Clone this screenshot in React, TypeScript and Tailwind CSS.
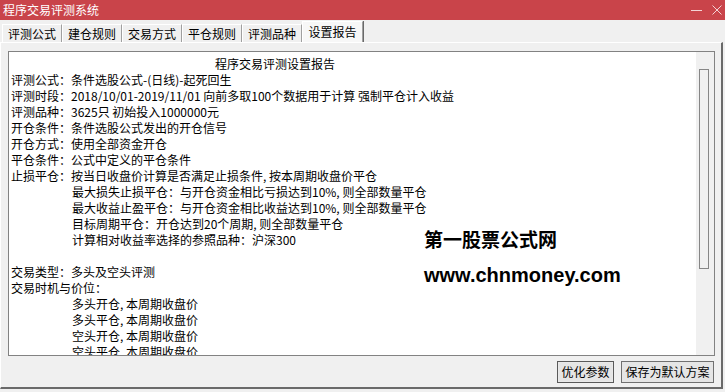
const lines: { text: string; indent?: number }[] = [
  { text: "程序交易评测设置报告", indent: 204 },
  { text: "评测公式：条件选股公式-(日线)-起死回生" },
  { text: "评测时段：2018/10/01-2019/11/01 向前多取100个数据用于计算 强制平仓计入收益" },
  { text: "评测品种：3625只 初始投入1000000元" },
  { text: "开仓条件：条件选股公式发出的开仓信号" },
  { text: "开仓方式：使用全部资金开仓" },
  { text: "平仓条件：公式中定义的平仓条件" },
  { text: "止损平仓：按当日收盘价计算是否满足止损条件, 按本周期收盘价平仓" },
  { text: "最大损失止损平仓：与开仓资金相比亏损达到10%, 则全部数量平仓", indent: 61 },
  { text: "最大收益止盈平仓：与开仓资金相比收益达到10%, 则全部数量平仓", indent: 61 },
  { text: "目标周期平仓：开仓达到20个周期, 则全部数量平仓", indent: 61 },
  { text: "计算相对收益率选择的参照品种：沪深300", indent: 61 },
  { text: "" },
  { text: "交易类型：多头及空头评测" },
  { text: "交易时机与价位：" },
  { text: "多头开仓, 本周期收盘价", indent: 61 },
  { text: "多头平仓, 本周期收盘价", indent: 61 },
  { text: "空头开仓, 本周期收盘价", indent: 61 },
  { text: "空头平仓, 本周期收盘价", indent: 61 },
];

const tabs = ["评测公式", "建仓规则", "交易方式", "平仓规则", "评测品种"];

export default function App() {
  return (
    <div
      className="relative w-[725px] h-[392px] overflow-hidden bg-[#f0f0f0] text-[12px] text-black"
      style={{ fontFamily: '"Noto Sans CJK SC", sans-serif' }}
    >
      {/* Title bar */}
      <div className="h-[20px] bg-[#c9444a] flex items-center pl-[3px] pr-[3px] text-white">
        <span className="leading-[20px]">程序交易评测系统</span>
        <div className="ml-auto flex items-center gap-[10px]">
          <svg width="11" height="10" viewBox="0 0 11 10">
            <line x1="0" y1="5.5" x2="11" y2="5.5" stroke="#f3d3d5" strokeWidth="1" />
          </svg>
          <svg width="10" height="10" viewBox="0 0 10 10">
            <path d="M0.5 0.5 L9.5 9.5 M9.5 0.5 L0.5 9.5" stroke="#f3d3d5" strokeWidth="1" />
          </svg>
        </div>
      </div>

      {/* Tabs */}
      <div className="h-[22px] flex items-end pl-[2px]">
        {tabs.map((t) => (
          <div
            key={t}
            className="w-[60px] h-[18px] flex items-center justify-center border-l border-t border-white border-r border-r-[#a0a0a0] shadow-[1px_0_0_#696969] leading-[16px]"
          >
            {t}
          </div>
        ))}
        <div className="w-[61px] h-[21px] flex items-center justify-center bg-[#f7f7f7] border-l border-t border-white border-r border-r-[#a0a0a0] shadow-[1px_0_0_#696969] leading-[18px] pb-[1px]">
          设置报告
        </div>
      </div>

      {/* Tab page */}
      <div className="w-[723px] h-[347px] border-t border-l border-white border-r-2 border-b-2 border-r-[#6a6a6a] border-b-[#6a6a6a] flex flex-col">
        <div className="ml-[7px] mt-[8px] w-[707px] h-[305px] border border-[#828282] bg-white flex">
          <div className="flex-1 overflow-hidden pl-[2px] pt-[4px]">
            {lines.map((l, i) => (
              <div
                key={i}
                className="h-[16px] leading-[16px] whitespace-nowrap"
                style={l.indent ? { paddingLeft: l.indent } : undefined}
              >
                {l.text}
              </div>
            ))}
          </div>
          <div className="w-[18px] h-full bg-[#f0f0f0] pt-[17px] pl-[3px]">
            <div className="w-[10px] h-[200px] border border-[#868686] bg-[#f0f0f0]" />
          </div>
        </div>

        <div className="mt-[5px] flex justify-end gap-[7px] pr-[7px]">
          <button className="w-[57px] h-[22px] border border-[#5a5a5a] bg-[#e5e5e5] shadow-[inset_0_0_0_1px_#e9e9e9] leading-[18px]">
            优化参数
          </button>
          <button className="w-[93px] h-[22px] border border-[#707070] bg-[#e5e5e5] leading-[18px]">
            保存为默认方案
          </button>
        </div>
      </div>

      {/* Watermark */}
      <div className="absolute left-[424px] top-[228px] flex flex-col text-black">
        <div className="h-[22px] leading-[22px] text-[19px] font-bold">第一股票公式网</div>
        <div
          className="mt-[13px] h-[24px] leading-[24px] text-[20px] font-bold"
          style={{ fontFamily: '"Liberation Sans", Arial, sans-serif' }}
        >
          www.chnmoney.com
        </div>
      </div>
    </div>
  );
}
